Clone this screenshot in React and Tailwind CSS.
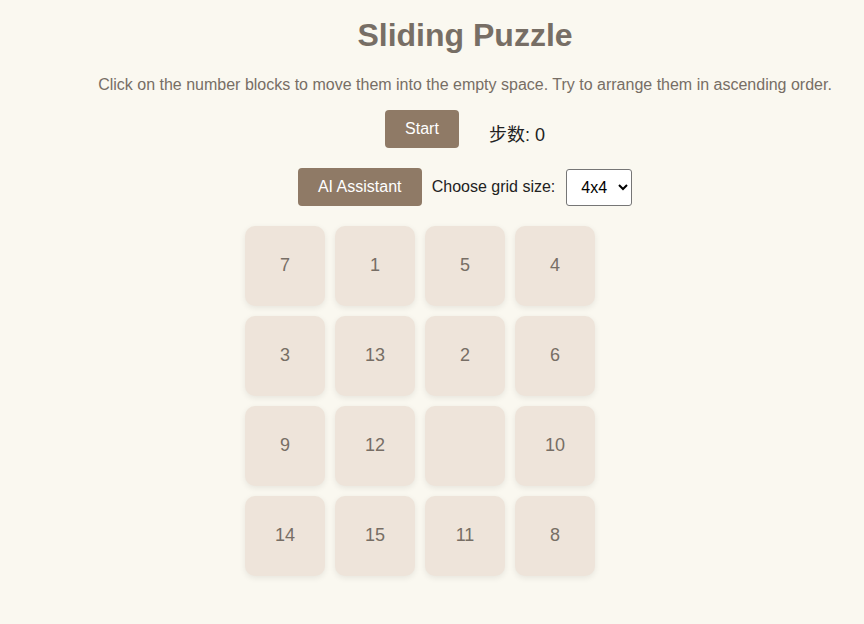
import { useState } from 'react';

const TILES = [7, 1, 5, 4, 3, 13, 2, 6, 9, 12, 0, 10, 14, 15, 11, 8];

const App = () => {
  const [tiles] = useState(TILES);
  const [moves] = useState(0);

  return (
    <div
      className="min-h-[624px] bg-[#faf8f0] pl-[66px] flex flex-col items-center text-[#776e65]"
      style={{ fontFamily: '"Liberation Sans", "Noto Sans CJK SC", Arial, sans-serif' }}
    >
      <h1 className="mt-[16px] text-[32px] leading-[38px] font-bold">Sliding Puzzle</h1>

      <p className="mt-[21px] text-[16px] leading-[20px]">
        Click on the number blocks to move them into the empty space. Try to arrange them in ascending order.
      </p>

      {/* controls */}
      <div className="mt-[15px] flex items-start gap-[30px]">
        <button className="w-[74px] h-[38px] rounded-[4px] bg-[#8f7a66] text-white text-[16px]">
          Start
        </button>
        <span className="mt-[14px] text-[18px] leading-[22px] text-[#222]">步数: {moves}</span>
      </div>

      <div className="mt-[20px] flex items-center gap-[10px]">
        <button className="w-[124px] h-[38px] rounded-[4px] bg-[#8f7a66] text-white text-[16px]">
          AI Assistant
        </button>
        <label className="text-[16px] text-[#222]">Choose grid size:</label>
        <select
          defaultValue="4"
          className="ml-[1px] w-[66px] h-[37px] pl-[10px] bg-white border border-[#767676] rounded-[3px] text-[16px] text-black"
        >
          <option value="3">3x3</option>
          <option value="4">4x4</option>
          <option value="5">5x5</option>
        </select>
      </div>

      {/* board */}
      <div className="mt-[20px] mr-[90px] grid grid-cols-4 gap-[10px] w-[350px]">
        {tiles.map((n, i) => (
          <div
            key={`tile-${i}`}
            className="w-[80px] h-[80px] pb-[2px] rounded-[10px] bg-[#eee4da] shadow-[0_2px_6px_rgba(0,0,0,0.08)] flex items-center justify-center text-[18px] text-[#776e65] cursor-pointer"
          >
            {n !== 0 ? n : ''}
          </div>
        ))}
      </div>
    </div>
  );
};

export default App;
